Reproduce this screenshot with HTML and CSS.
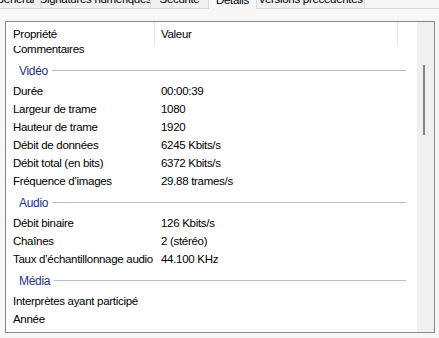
FILE: index.html
```html
<!DOCTYPE html>
<html lang="fr">
<head>
  <meta charset="UTF-8">
  <meta name="viewport" content="width=device-width, initial-scale=1.0">
  <title>Propriétés</title>
  <link rel="stylesheet" href="styles.css">
</head>
<body>
  <div class="tabs">
    <div class="tab tab-first">Général</div>
    <div class="tab tab-sign">Signatures numériques</div>
    <div class="tab tab-secu">Sécurité</div>
    <div class="tab tab-active">Détails</div>
    <div class="tab tab-versions">Versions précédentes</div>
  </div>

  <div class="panel">
    <div class="listbox">
      <div class="main">
        <div class="header">
          <div class="head-cell head-prop">Propriété</div>
          <div class="head-cell head-val">Valeur</div>
          <div class="head-cell head-rest"></div>
        </div>
        <div class="list">
          <div class="rows">
            <div class="row"><span class="prop">Commentaires</span><span class="val"></span></div>

            <div class="group"><span class="group-name">Vidéo</span><span class="group-line"></span></div>
            <div class="row"><span class="prop">Durée</span><span class="val">00:00:39</span></div>
            <div class="row"><span class="prop">Largeur de trame</span><span class="val">1080</span></div>
            <div class="row"><span class="prop">Hauteur de trame</span><span class="val">1920</span></div>
            <div class="row"><span class="prop">Débit de données</span><span class="val">6245 Kbits/s</span></div>
            <div class="row"><span class="prop">Débit total (en bits)</span><span class="val">6372 Kbits/s</span></div>
            <div class="row"><span class="prop">Fréquence d’images</span><span class="val">29.88 trames/s</span></div>

            <div class="group"><span class="group-name">Audio</span><span class="group-line"></span></div>
            <div class="row"><span class="prop">Débit binaire</span><span class="val">126 Kbits/s</span></div>
            <div class="row"><span class="prop">Chaînes</span><span class="val">2 (stéréo)</span></div>
            <div class="row"><span class="prop">Taux d’échantillonnage audio</span><span class="val">44.100 KHz</span></div>

            <div class="group"><span class="group-name">Média</span><span class="group-line"></span></div>
            <div class="row"><span class="prop">Interprètes ayant participé</span><span class="val"></span></div>
            <div class="row"><span class="prop">Année</span><span class="val"></span></div>
            <div class="row"><span class="prop">Genre</span><span class="val"></span></div>
          </div>
        </div>
      </div>
      <div class="scrollbar">
        <div class="thumb"></div>
      </div>
    </div>
  </div>
</body>
</html>
```

FILE: styles.css
```css
:root {
  --page: #f7f7f7;
  --tab: #f0f0f0;
  --tab-border: #d9d9d9;
  --box-border: #828790;
  --group-blue: #1e3287;
  --group-line: #b3bfce;
  --text: #000000;
  --sep: #e5e5e5;
}
body {
  margin: 0;
  width: 439px;
  height: 338px;
  overflow: hidden;
  background: var(--page);
  font-family: "Liberation Sans", Arial, sans-serif;
  font-size: 11.5px;
  letter-spacing: -0.3px;
  color: var(--text);
}
.tabs {
  display: flex;
  height: 18px;
  margin-top: -10px;
  border-bottom: 1px solid var(--tab-border);
  background: var(--page);
}
.tab {
  display: flex;
  align-items: center;
  justify-content: center;
  height: 18px;
  box-sizing: border-box;
  background: var(--tab);
  border-right: 1px solid var(--tab-border);
  padding: 0 2px;
  white-space: nowrap;
  overflow: hidden;
}
.tab-first {
  width: 41px;
  justify-content: flex-end;
  padding-right: 6px;
}
.tab-sign {
  width: 110px;
}
.tab-secu {
  width: 58px;
}
.tab-active {
  width: 48px;
  background: var(--page);
  height: 19px;
  margin-bottom: -1px;
}
.tab-versions {
  width: 108px;
}
.panel {
  padding: 12px 4px 0 5px;
}
.listbox {
  display: flex;
  height: 310px;
  border: 1px solid var(--box-border);
  background: #ffffff;
}
.main {
  flex: 1;
  display: flex;
  flex-direction: column;
  min-width: 0;
}
.header {
  display: flex;
  height: 24px;
  flex-shrink: 0;
  background: #ffffff;
  position: relative;
  z-index: 1;
}
.head-cell {
  display: flex;
  align-items: center;
  height: 24px;
  box-sizing: border-box;
}
.head-prop {
  width: 149px;
  padding-left: 7px;
  border-right: 1px solid var(--sep);
}
.head-val {
  width: 243px;
  padding-left: 6px;
  border-right: 1px solid var(--sep);
}
.head-rest {
  flex: 1;
}
.list {
  flex: 1;
  overflow: hidden;
}
.rows {
  margin-top: -6px;
}
.row {
  display: flex;
  height: 18px;
  align-items: center;
  white-space: nowrap;
}
.prop {
  width: 149px;
  box-sizing: border-box;
  padding-left: 7px;
}
.val {
  padding-left: 6px;
}
.group {
  display: flex;
  align-items: center;
  height: 24px;
  padding: 0 11px 0 13px;
}
.group-name {
  color: var(--group-blue);
  font-size: 12px;
  margin-right: 4px;
  margin-top: 2px;
}
.group-line {
  flex: 1;
  height: 1px;
  background: var(--group-line);
}
.scrollbar {
  width: 17px;
  background: var(--tab);
  position: relative;
}
.thumb {
  position: absolute;
  left: 6px;
  top: 43px;
  width: 2px;
  height: 70px;
  background: #858585;
}
```
